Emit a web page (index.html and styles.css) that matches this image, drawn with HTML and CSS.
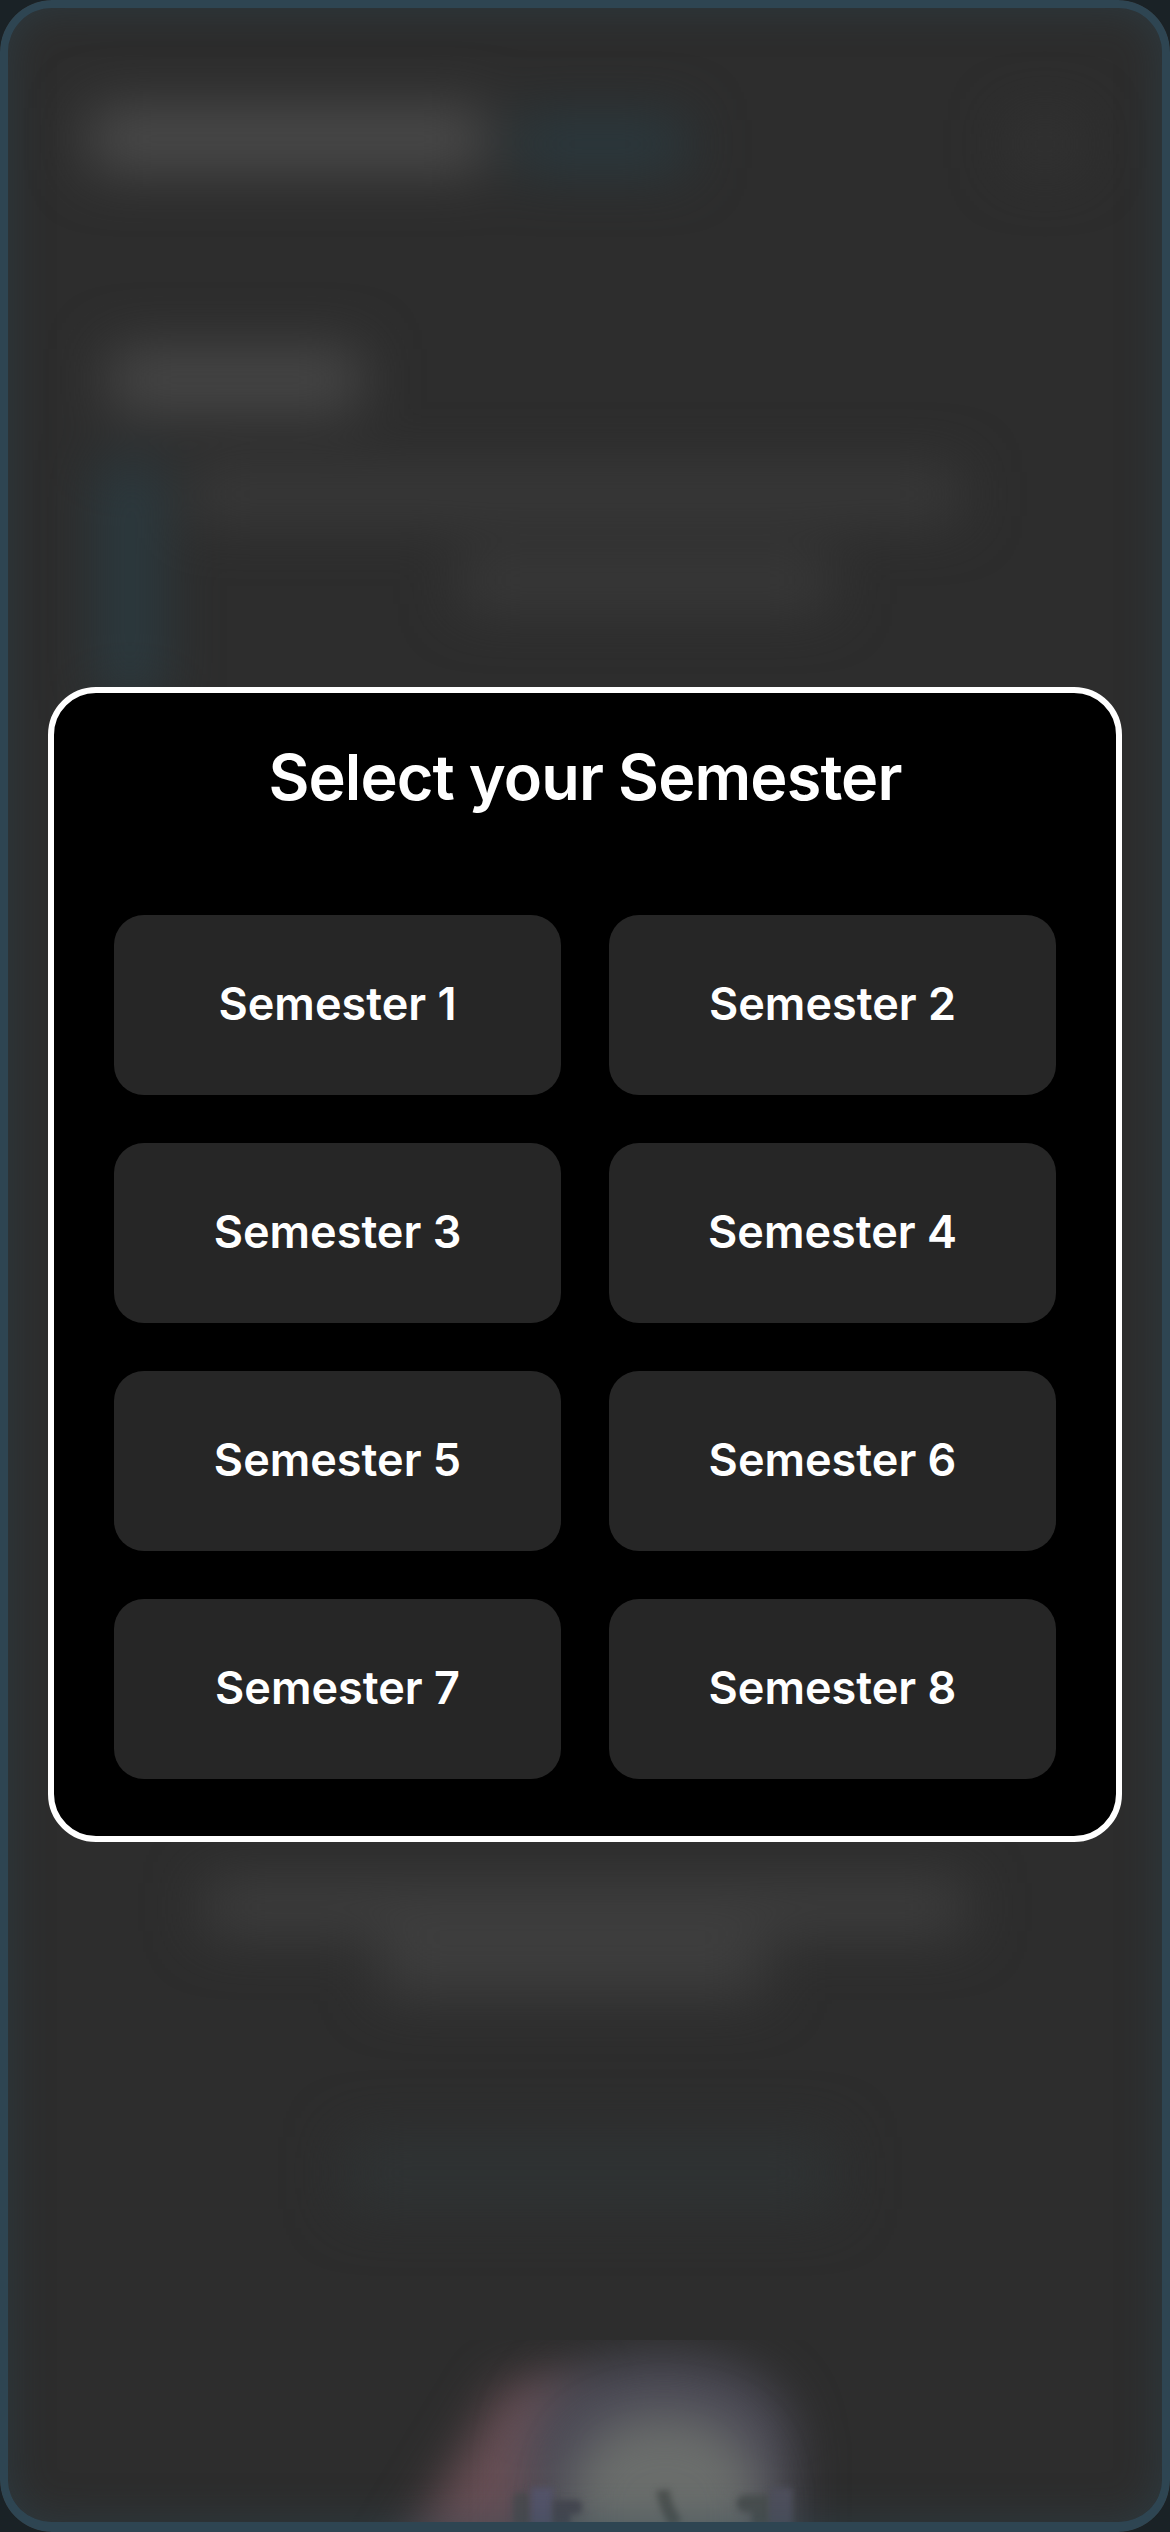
FILE: index.html
```html
<!DOCTYPE html>
<html lang="en">
<head>
    <meta charset="UTF-8">
    <meta name="viewport" content="width=device-width, initial-scale=1.0">
    <title>Select your Semester</title>
    <link rel="stylesheet" href="styles.css">
</head>
<body>
    <div class="screen">
        <div class="backdrop">
            <div class="top-row">
                <div class="blur-title"></div>
                <div class="blur-badge"></div>
                <div class="blur-icon"></div>
            </div>
            <div class="blur-heading"></div>
            <div class="notice">
                <div class="blur-accent"></div>
                <div class="notice-lines">
                    <div class="blur-line line-long"></div>
                    <div class="blur-line line-short"></div>
                </div>
            </div>
            <div class="blur-line under-long"></div>
            <div class="blur-line under-short"></div>
            <div class="blur-button"></div>
        </div>

        <svg class="logo-art" viewBox="340 2340 520 192" width="520" height="192">
            <path class="soft" d="M375 2600 L505 2385 L580 2375 L580 2600 Z" fill="#6a5056"/>
            <path class="soft" d="M525 2600 V2450 Q530 2360 660 2355 Q790 2360 795 2450 V2600 Z" fill="#4c4b56"/>
            <path class="soft" d="M570 2600 V2490 Q580 2420 665 2415 Q750 2420 760 2490 V2600 Z" fill="#6b6e6c"/>
            <rect class="crisp" x="513" y="2492" width="18" height="34" rx="8" fill="#4c4a4e"/>
            <rect class="crisp" x="531" y="2488" width="22" height="38" fill="#55546a"/>
            <path class="crisp" d="M553 2526 V2500 H578 A8 8 0 0 1 578 2514 H570 V2526 Z" fill="#46464f"/>
            <path class="crisp" d="M663 2490 Q664 2505 676 2524" fill="none" stroke="#4e5250" stroke-width="13"/>
            <path class="crisp" d="M770 2526 V2495 H745 A8 8 0 0 0 745 2512 H752 V2526 Z" fill="#4a4e4e"/>
            <rect class="crisp" x="770" y="2488" width="22" height="38" fill="#4f4f5c"/>
        </svg>

        <div class="frame"></div>

        <div class="overlay">
            <div class="modal">
                <h2 class="modal-title">Select your Semester</h2>
                <div class="semester-grid">
                    <button class="semester-btn">Semester 1</button>
                    <button class="semester-btn">Semester 2</button>
                    <button class="semester-btn">Semester 3</button>
                    <button class="semester-btn">Semester 4</button>
                    <button class="semester-btn">Semester 5</button>
                    <button class="semester-btn">Semester 6</button>
                    <button class="semester-btn">Semester 7</button>
                    <button class="semester-btn">Semester 8</button>
                </div>
            </div>
        </div>
    </div>
</body>
</html>
```

FILE: styles.css
```css
* {
    box-sizing: border-box;
}
html, body {
    margin: 0;
    background-color: #1a2226;
}
body {
    font-family: Inter, "Noto Sans", sans-serif;
    color: white;
}
.screen {
    position: relative;
    width: 1170px;
    height: 2532px;
    overflow: hidden;
    background-color: #2d2d2d;
    border-radius: 52px;
}

/* blurred page behind the modal */
.backdrop {
    display: flex;
    flex-direction: column;
    height: 2532px;
    padding: 108px 90px 0;
    filter: blur(28px);
}
.top-row {
    display: flex;
    height: 62px;
}
.blur-title {
    width: 395px;
    background-color: #4c4c4c;
}
.blur-badge {
    width: 170px;
    margin-left: 30px;
    margin-top: 10px;
    background-color: #2a3a40;
}
.blur-icon {
    width: 70px;
    margin-left: auto;
    margin-top: 10px;
    background-color: #323232;
}
.blur-heading {
    width: 250px;
    height: 62px;
    margin: 179px 0 0 20px;
    background-color: #484848;
}
.notice {
    display: flex;
    gap: 30px;
    height: 240px;
    margin-top: 49px;
}
.blur-accent {
    width: 60px;
    margin-left: 10px;
    background-color: #2b3b41;
}
.notice-lines {
    display: flex;
    flex-direction: column;
    flex: 1;
}
.blur-line {
    height: 50px;
    background-color: #3a3a3a;
}
.line-long {
    width: 770px;
    margin-top: 9px;
}
.line-short {
    width: 370px;
    margin: 38px 0 0 270px;
}
.under-long {
    width: 760px;
    height: 52px;
    margin: 1181px 0 0 115px;
    background-color: #3f3f3f;
}
.under-short {
    width: 385px;
    height: 56px;
    margin: 5px 0 0 290px;
    background-color: #3f3f3f;
}
.blur-button {
    width: 490px;
    height: 72px;
    margin: 143px 0 0 255px;
    background-color: #2f3334;
}

/* the blurred logo sits on the bottom edge */
.logo-art {
    position: absolute;
    left: 340px;
    bottom: 0;
}
.soft {
    filter: blur(24px);
}
.crisp {
    filter: blur(3px);
}

/* teal edge of the device screen */
.frame {
    position: absolute;
    inset: 0;
    border: 8px solid #2e4552;
    border-bottom-width: 10px;
    border-radius: 52px;
    box-shadow: inset 0 0 40px rgba(46, 72, 84, 0.5);
}

.overlay {
    position: absolute;
    inset: 0;
    display: flex;
    align-items: center;
    justify-content: center;
    padding-bottom: 3px;
}
.modal {
    width: 1074px;
    height: 1155px;
    padding: 36px 60px 0;
    background-color: black;
    border: 6px solid white;
    border-radius: 48px;
}
.modal-title {
    margin: 0 0 90px;
    font-size: 63px;
    line-height: 96px;
    font-weight: 600;
    letter-spacing: -0.9px;
    text-align: center;
}
.semester-grid {
    display: grid;
    grid-template-columns: 447px 447px;
    grid-auto-rows: 180px;
    gap: 48px;
}
.semester-btn {
    border: none;
    border-radius: 30px;
    background-color: #262626;
    color: white;
    font-family: inherit;
    font-size: 45px;
    font-weight: 600;
    padding: 0 0 4px;
}
```
